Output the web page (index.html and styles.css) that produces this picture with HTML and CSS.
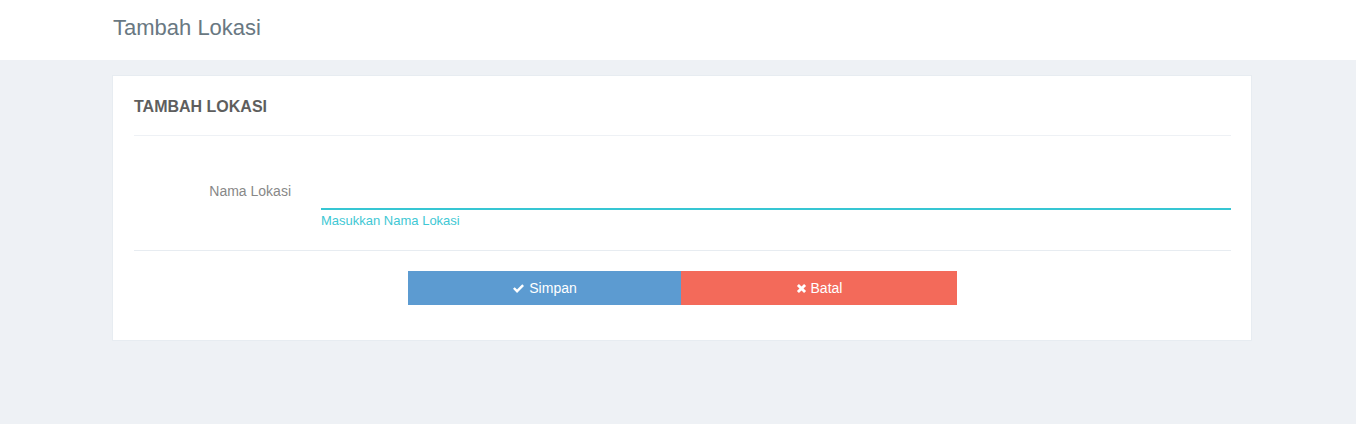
FILE: index.html
```html
<!DOCTYPE html>
<html lang="id">
<head>
<meta charset="utf-8">
<title>Tambah Lokasi</title>
<link rel="stylesheet" href="styles.css">
</head>
<body>
  <header class="page-head">
    <h1 class="page-title">Tambah Lokasi</h1>
  </header>
  <main class="page-content">
    <section class="portlet">
      <div class="portlet-title">TAMBAH LOKASI</div>
      <form class="portlet-body">
        <div class="form-row">
          <label class="form-label" for="nama">Nama Lokasi</label>
          <div class="form-field">
            <input class="form-input" id="nama" type="text">
            <span class="help">Masukkan Nama Lokasi</span>
          </div>
        </div>
        <div class="form-actions">
          <div class="btn-group">
            <button type="button" class="btn btn-blue">
              <svg class="ico" viewBox="0 0 14 12" width="13" height="11"><path d="M1 6.4 L2.9 4.5 L5.4 7 L11.1 1.3 L13 3.2 L5.4 10.8 Z" fill="#fff"/></svg>
              Simpan
            </button>
            <button type="button" class="btn btn-red">
              <svg class="ico" viewBox="0 0 12 12" width="11" height="11"><path d="M1 3.2 L3.2 1 L6 3.8 L8.8 1 L11 3.2 L8.2 6 L11 8.8 L8.8 11 L6 8.2 L3.2 11 L1 8.8 L3.8 6 Z" fill="#fff"/></svg>
              Batal
            </button>
          </div>
        </div>
      </form>
    </section>
  </main>
</body>
</html>
```

FILE: styles.css
```css
* { box-sizing: border-box; }
html, body { margin: 0; padding: 0; }
body {
  background: #eef1f5;
  font-family: "Liberation Sans", Arial, sans-serif;
  min-height: 424px;
}
.page-head {
  background: #fff;
  height: 60px;
  padding: 0 113px;
}
.page-title {
  margin: 0;
  padding-top: 15px;
  font-size: 22px;
  line-height: 26px;
  font-weight: 400;
  color: #697882;
}
.page-content {
  padding: 15px 104px 0 112px;
}
.portlet {
  background: #fff;
  border: 1px solid #e7ecf1;
  padding: 0 20px 35px 21px;
}
.portlet-title {
  padding: 21px 0 19px;
  line-height: 19px;
  font-size: 16px;
  font-weight: 700;
  color: #5e5e5e;
  border-bottom: 1px solid #eef1f5;
}
.portlet-body {
  margin: 0;
}
.form-row {
  display: flex;
  gap: 30px;
  padding: 40px 0 20px;
  border-bottom: 1px solid #e7ecf1;
}
.form-label {
  width: 158px;
  text-align: right;
  font-size: 14px;
  line-height: 20px;
  color: #888;
  padding-top: 5px;
  margin-left: -1px;
}
.form-field {
  flex: 1;
  display: flex;
  flex-direction: column;
}
.form-input {
  height: 34px;
  border: 0;
  border-bottom: 2px solid #36c6d3;
  outline: none;
  background: transparent;
  padding: 0;
}
.help {
  margin-top: 2px;
  font-size: 13px;
  line-height: 18px;
  color: #3fc8d4;
}
.form-actions {
  display: flex;
  justify-content: center;
  padding-top: 20px;
}
.btn-group {
  display: flex;
}
.btn {
  height: 34px;
  border: 0;
  color: #fff;
  font-family: "Liberation Sans", Arial, sans-serif;
  font-size: 14px;
  display: flex;
  align-items: center;
  justify-content: center;
  gap: 4px;
  cursor: pointer;
}
.btn-blue { background: #5c9bd1; width: 273px; }
.btn-red { background: #f36a5a; width: 276px; }
.ico { display: block; }
```
